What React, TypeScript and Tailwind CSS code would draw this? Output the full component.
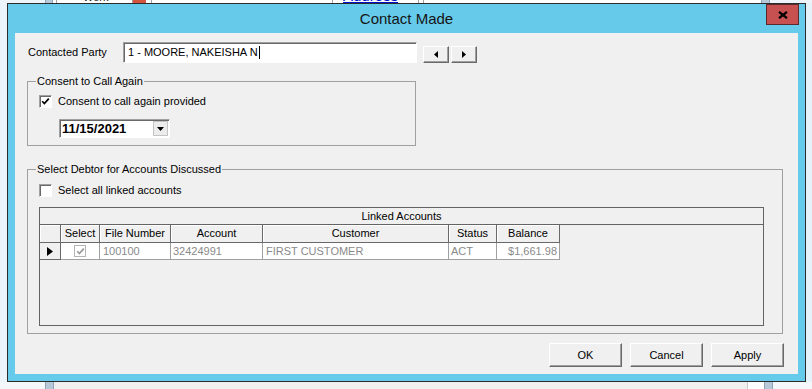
import React from "react";

const raised =
  "bg-[#f0f0f0] border border-t-white border-l-white border-r-[#696969] border-b-[#696969] shadow-[inset_-1px_-1px_0_#a0a0a0]";
const sunken =
  "bg-white border border-t-[#a0a0a0] border-l-[#a0a0a0] border-r-white border-b-white shadow-[inset_1px_1px_0_#696969]";

function CheckBox({ checked, disabled }: { checked?: boolean; disabled?: boolean }) {
  return (
    <span
      className={
        disabled
          ? "w-[12px] h-[12px] shrink-0 bg-white border border-[#b4b4b4] flex items-center justify-center"
          : `w-[13px] h-[13px] shrink-0 flex items-center justify-center ${sunken}`
      }
    >
      {checked && (
        <svg width="9" height="9" viewBox="0 0 9 9">
          <path
            d="M1.2 4.2 L3.4 6.6 L7.8 1.6"
            stroke={disabled ? "#9a9a9a" : "#000"}
            strokeWidth="1.7"
            fill="none"
          />
        </svg>
      )}
    </span>
  );
}

function ArrowButton({ dir }: { dir: "left" | "right" }) {
  return (
    <button className={`w-[26px] h-[17px] flex items-center justify-center ${raised}`}>
      <svg width="4" height="7" viewBox="0 0 4 7">
        {dir === "left" ? <path d="M4 0 L0 3.5 L4 7 Z" fill="#000" /> : <path d="M0 0 L4 3.5 L0 7 Z" fill="#000" />}
      </svg>
    </button>
  );
}

function TopStrip() {
  return (
    <div className="h-[3px] flex overflow-hidden bg-white shrink-0">
      <div className="w-[45px] bg-[#eef5fa]" />
      <div className="w-[8px] bg-[#b7c8d8] border-x border-[#8ea3b8]" />
      <div className="w-[4px] border-r border-[#a0a0a0]" />
      <div className="w-[26px]" />
      <div className="w-[43px] text-[11px] leading-[12px] -mt-[9px] text-[#222]">Work</div>
      <div className="w-[7px] border-r border-[#a0a0a0]" />
      <div className="w-[13px] bg-[#d4553f]" />
      <div className="w-[6px] border-r border-[#a0a0a0]" />
      <div className="w-[181px] border-r border-[#a0a0a0]" />
      <div className="w-[10px]" />
      <div className="w-[64px] text-[15px] leading-[16px] -mt-[12px] text-[#0010c8] underline">Address</div>
      <div className="w-[12px] border-r border-[#a0a0a0]" />
      <div className="w-[5px] border-r border-[#a0a0a0]" />
      <div className="w-[337px]" />
      <div className="w-[9px] bg-[#b7c8d8] border-x border-[#8ea3b8]" />
      <div className="flex-1 bg-[#eef5fa]" />
    </div>
  );
}

function BottomStrip() {
  return (
    <div className="h-[7px] flex bg-white shrink-0">
      <div className="w-[45px] bg-[#f4f8fb]" />
      <div className="w-[9px] bg-[#b7c8d8] border-x border-[#8ea3b8]" />
      <div className="w-[694px] bg-[#efefef] border-r border-[#c8c8c8]" />
      <div className="w-[16px]" />
      <div className="w-[9px] bg-[#b7c8d8] border-x border-[#8ea3b8]" />
      <div className="flex-1 bg-[#f4f8fb]" />
    </div>
  );
}

const columns = [
  { key: "rh", label: "", w: "w-[21px]" },
  { key: "sel", label: "Select", w: "w-[39px]" },
  { key: "file", label: "File Number", w: "w-[71px]" },
  { key: "acct", label: "Account", w: "w-[92px]" },
  { key: "cust", label: "Customer", w: "w-[186px]" },
  { key: "status", label: "Status", w: "w-[48px]" },
  { key: "bal", label: "Balance", w: "w-[63px]" },
];

function LinkedAccounts() {
  return (
    <div className="ml-[11px] mt-[10px] w-[725px] h-[119px] border border-[#646464] bg-[#f0f0f0] flex flex-col">
      <div className="h-[17px] border-b border-[#646464] flex items-center justify-center">Linked Accounts</div>
      <div className="h-[18px] flex">
        {columns.map((c) => (
          <div
            key={c.key}
            className={`${c.w} h-full flex items-center justify-center border-r border-b border-[#696969] shadow-[inset_1px_1px_0_#fff]`}
          >
            {c.label}
          </div>
        ))}
      </div>
      <div className="h-[17px] flex text-[#8a8a8a]">
        <div className="w-[21px] h-full flex items-center justify-center border-r border-b border-[#696969]">
          <svg width="6" height="9" viewBox="0 0 6 9">
            <path d="M0 0 L6 4.5 L0 9 Z" fill="#000" />
          </svg>
        </div>
        <div className="w-[39px] h-full bg-white flex items-center justify-center border-r border-b border-[#a0a0a0]">
          <CheckBox checked disabled />
        </div>
        <div className="w-[71px] h-full bg-white flex items-center pl-[3px] border-r border-b border-[#a0a0a0]">100100</div>
        <div className="w-[92px] h-full bg-white flex items-center pl-[2px] border-r border-b border-[#a0a0a0]">32424991</div>
        <div className="w-[186px] h-full bg-white flex items-center pl-[3px] border-r border-b border-[#a0a0a0]">FIRST CUSTOMER</div>
        <div className="w-[48px] h-full bg-white flex items-center pl-[2px] border-r border-b border-[#a0a0a0]">ACT</div>
        <div className="w-[63px] h-full bg-white flex items-center justify-end pr-[2px] border-r border-b border-[#a0a0a0]">$1,661.98</div>
      </div>
    </div>
  );
}

function ContactMadeDialog() {
  return (
    <div className="w-[799px] h-[379px] border border-[#2b2b2b] bg-[#66caea] flex flex-col px-[7px] pb-[7px]">
      <div className="h-[29px] grid grid-cols-[1fr_auto_1fr] items-center shrink-0">
        <div />
        <div className="text-[15px] text-[#151515] leading-none">Contact Made</div>
        <div className="justify-self-end self-start -mr-[1px] w-[33px] h-[21px] bg-[#c75050] border border-[#5a2a2a] flex items-center justify-center">
          <svg width="10" height="8" viewBox="0 0 10 8">
            <path d="M1 0.8 L9 7.2 M9 0.8 L1 7.2" stroke="#000" strokeWidth="2.2" />
          </svg>
        </div>
      </div>

      <div className="flex-1 bg-[#f0f0f0] flex flex-col">
        <div className="pt-[9px] flex items-center">
          <div className="pl-[13px] w-[108px]">Contacted Party</div>
          <div className={`w-[294px] h-[21px] flex items-center pl-[4px] text-[11px] ${sunken}`}>
            <span>1 - MOORE, NAKEISHA N</span>
            <span className="w-px h-[13px] bg-black ml-px" />
          </div>
          <div className="self-end ml-[6px] flex gap-[2px]">
            <ArrowButton dir="left" />
            <ArrowButton dir="right" />
          </div>
        </div>

        <fieldset className="ml-[12px] mt-[12px] w-[389px] border border-[#a0a0a0] pb-[7px] min-w-0">
          <legend className="ml-[8px] px-[1px] leading-[13px]">Consent to Call Again</legend>
          <div className="mt-[7px] h-[13px] pl-[11px] flex items-center">
            <CheckBox checked />
            <span className="ml-[6px]">Consent to call again provided</span>
          </div>
          <div className={`ml-[31px] mt-[11px] w-[111px] h-[19px] flex items-center ${sunken}`}>
            <span className="flex-1 pl-[2px] text-[13px] font-bold leading-none">11/15/2021</span>
            <span className="w-[15px] h-[15px] mr-[1px] bg-[#ececec] border border-[#c4c4c4] flex items-center justify-center">
              <svg width="7" height="4" viewBox="0 0 7 4">
                <path d="M0 0 L7 0 L3.5 4 Z" fill="#000" />
              </svg>
            </span>
          </div>
        </fieldset>

        <fieldset className="ml-[12px] mt-[17px] w-[756px] border border-[#a0a0a0] pb-[7px] min-w-0">
          <legend className="ml-[8px] px-[1px] leading-[13px]">Select Debtor for Accounts Discussed</legend>
          <div className="mt-[8px] h-[13px] pl-[11px] flex items-center">
            <CheckBox />
            <span className="ml-[6px]">Select all linked accounts</span>
          </div>
          <LinkedAccounts />
        </fieldset>

        <div className="mt-[9px] pr-[14px] flex justify-end gap-[8px]">
          <button className={`w-[73px] h-[24px] ${raised}`}>OK</button>
          <button className={`w-[73px] h-[24px] ${raised}`}>Cancel</button>
          <button className={`w-[73px] h-[24px] ${raised}`}>Apply</button>
        </div>
      </div>
    </div>
  );
}

export default function App() {
  return (
    <div className="w-[812px] h-[389px] overflow-hidden bg-white flex flex-col font-['Liberation_Sans',Arial,sans-serif] text-[11px] text-black">
      <TopStrip />
      <div className="flex h-[379px] shrink-0">
        <div className="w-[7px] bg-[#eaf4fa]" />
        <ContactMadeDialog />
        <div className="flex-1 bg-[#e6f2f9]" />
      </div>
      <BottomStrip />
    </div>
  );
}
